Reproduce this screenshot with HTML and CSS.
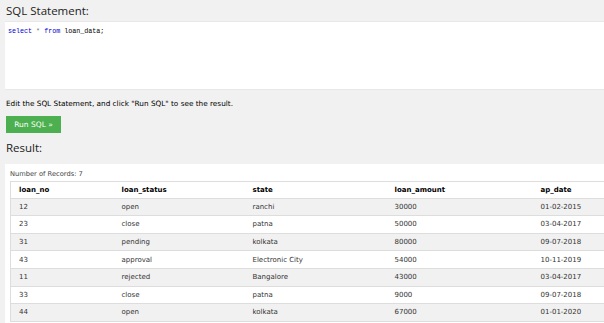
FILE: index.html
```html
<!DOCTYPE html>
<html lang="en">

<head>
	<meta charset="UTF-8">
	<meta name="viewport" content="width=device-width, initial-scale=1.0">
	<title>SQL Tryit</title>
	<link rel="stylesheet" href="styles.css">
</head>

<body>
	<div class="page">
		<h2 class="heading">SQL Statement:</h2>
		<div class="code">
			<span class="kw">select</span> <span class="op">*</span> <span class="kw">from</span> loan_data;
		</div>
		<p class="hint">Edit the SQL Statement, and click "Run SQL" to see the result.</p>
		<button class="run">Run SQL &raquo;</button>

		<h2 class="heading result-title">Result:</h2>
		<div class="result">
			<div class="count">Number of Records: 7</div>
			<table class="grid">
				<tr>
					<th class="c1">loan_no</th>
					<th class="c2">loan_status</th>
					<th class="c3">state</th>
					<th class="c4">loan_amount</th>
					<th class="c5">ap_date</th>
				</tr>
				<tr><td>12</td><td>open</td><td>ranchi</td><td>30000</td><td>01-02-2015</td></tr>
				<tr><td>23</td><td>close</td><td>patna</td><td>50000</td><td>03-04-2017</td></tr>
				<tr><td>31</td><td>pending</td><td>kolkata</td><td>80000</td><td>09-07-2018</td></tr>
				<tr><td>43</td><td>approval</td><td>Electronic City</td><td>54000</td><td>10-11-2019</td></tr>
				<tr><td>11</td><td>rejected</td><td>Bangalore</td><td>43000</td><td>03-04-2017</td></tr>
				<tr><td>33</td><td>close</td><td>patna</td><td>9000</td><td>09-07-2018</td></tr>
				<tr><td>44</td><td>open</td><td>kolkata</td><td>67000</td><td>01-01-2020</td></tr>
			</table>
		</div>
	</div>
</body>

</html>
```

FILE: styles.css
```css
* {
	box-sizing: border-box;
}

body {
	margin: 0;
	background-color: #f1f1f1;
	font-family: "DejaVu Sans", Verdana, sans-serif;
	color: #333;
	overflow: hidden;
}

.page {
	padding: 1px 0 0 5px;
}

.heading {
	margin: 0;
	font-family: "Open Sans", "Noto Sans", sans-serif;
	font-weight: normal;
	font-size: 11.5px;
	line-height: 20px;
	color: #222;
	padding-left: 1px;
}

.code {
	background-color: #fff;
	border-top: 1px solid #e8e8e8;
	border-bottom: 1px solid #e8e8e8;
	height: 69px;
	padding: 5px 3px;
	font-family: "Liberation Mono", monospace;
	font-size: 6.7px;
	line-height: 9px;
	color: #000;
}

.kw {
	color: mediumblue;
}

.op {
	color: #777;
}

.hint {
	margin: 9px 0 0 1px;
	font-size: 7.3px;
	line-height: 9px;
	color: #000;
}

.run {
	margin: 8px 0 0 1px;
	display: block;
	width: 55px;
	height: 17px;
	border: none;
	padding: 0;
	background-color: #4caf50;
	color: #fff;
	font-family: "DejaVu Sans", Verdana, sans-serif;
	font-size: 7.5px;
}

.result-title {
	margin-top: 5px;
}

.result {
	background-color: #fff;
	margin-top: 6px;
	padding: 6px 0 2px 5px;
	height: 161px;
}

.count {
	font-size: 6.7px;
	line-height: 9px;
	color: #444;
	margin-bottom: 2px;
}

.grid {
	border-collapse: collapse;
	border: 1px solid #ddd;
	width: 600px;
	font-size: 7px;
}

.grid th,
.grid td {
	text-align: left;
	padding: 0 0 0 8px;
	height: 17.6px;
	border-bottom: 1px solid #ddd;
}

.grid th {
	color: #000;
	height: 16.6px;
}

.grid tr:nth-child(even) {
	background-color: #f1f1f1;
}

.c1 {
	width: 103px;
}

.c2 {
	width: 131px;
}

.c3 {
	width: 142px;
}

.c4 {
	width: 146px;
}
```
